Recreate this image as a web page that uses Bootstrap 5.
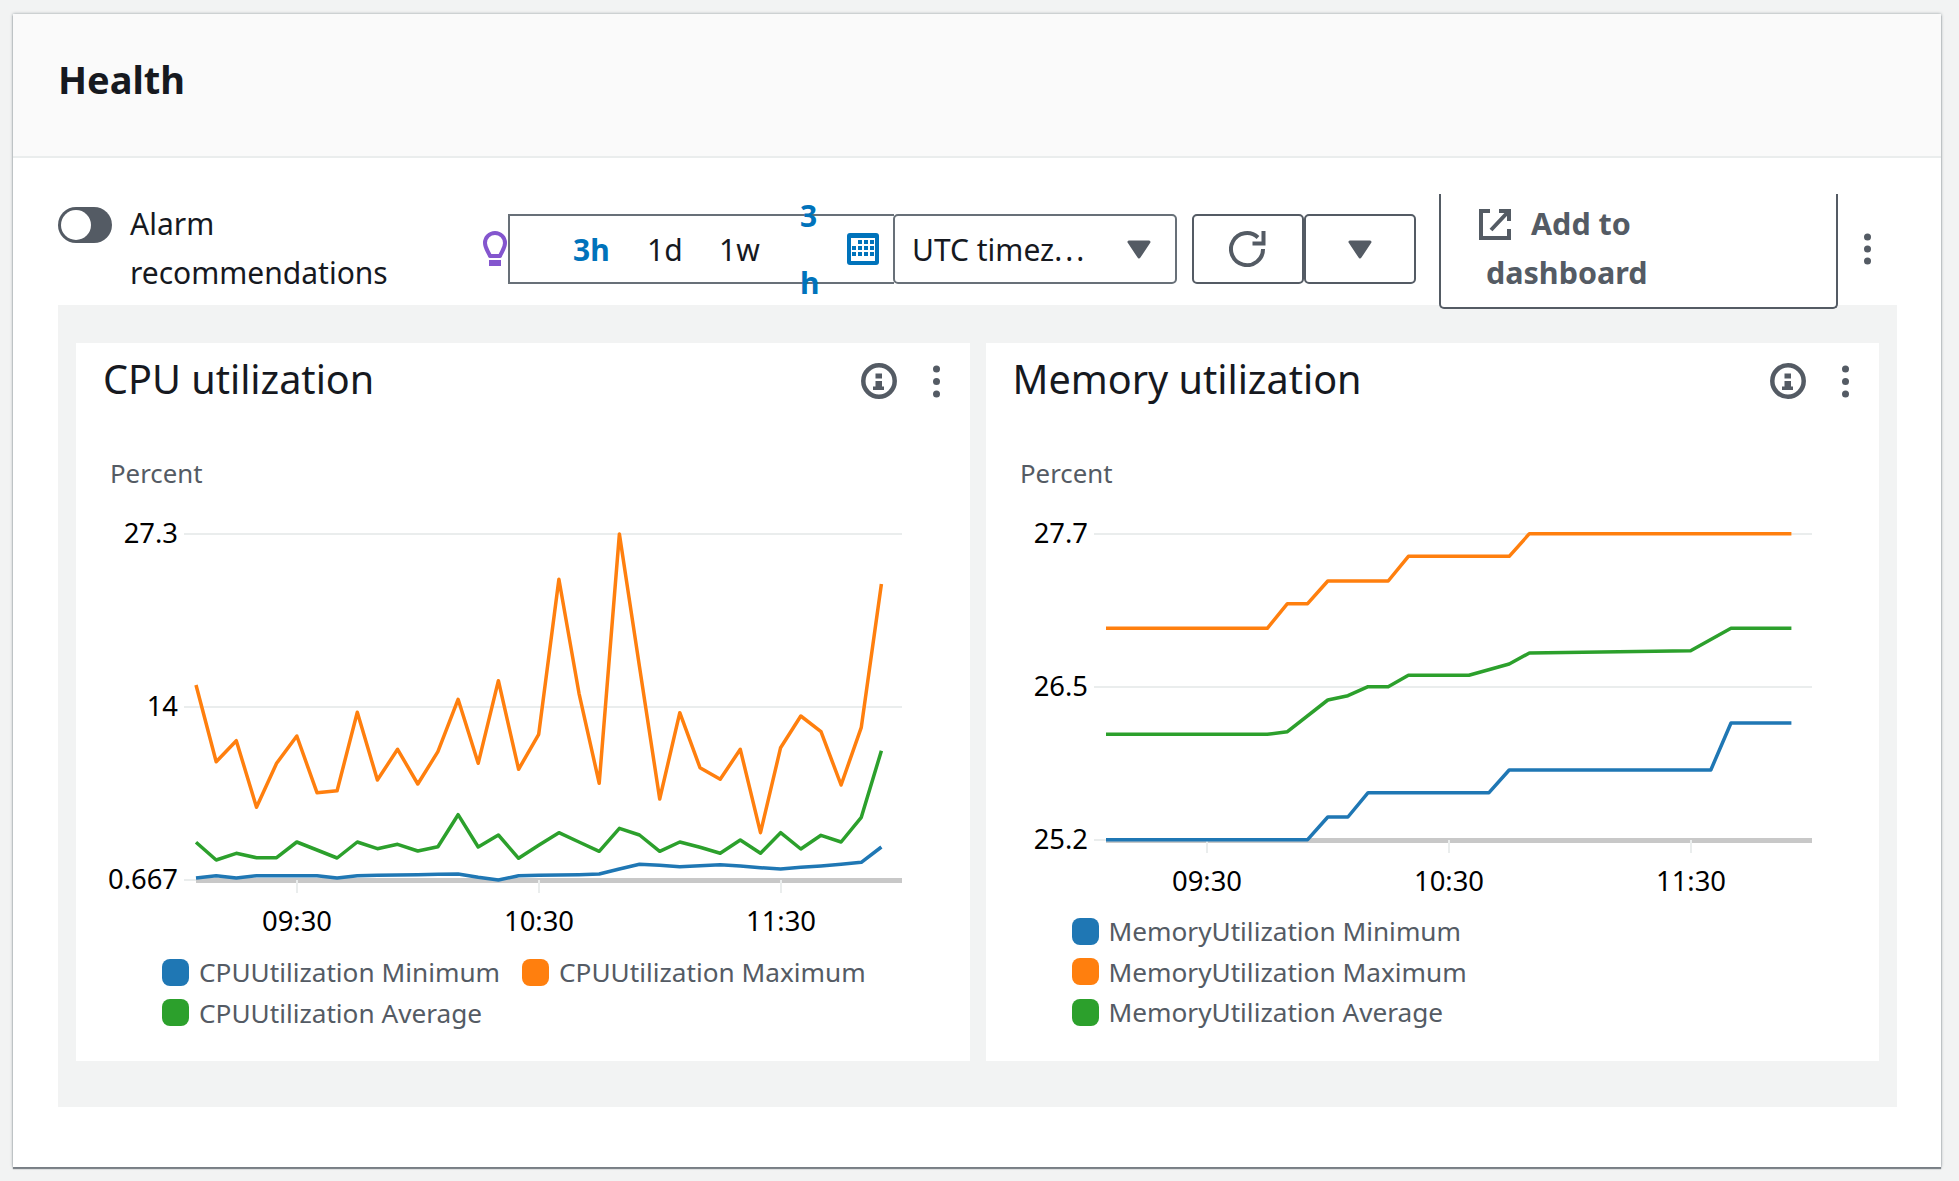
<!DOCTYPE html>
<html lang="en">
<head>
<meta charset="utf-8">
<title>Health</title>
<link href="https://cdn.jsdelivr.net/npm/bootstrap@5.3.0/dist/css/bootstrap.min.css" rel="stylesheet">
<style>
html,body{height:100%;overflow:hidden}
body{background:#f2f3f3;font-family:"Noto Sans","Open Sans",sans-serif;color:#16191f}
.hp-panel{margin:14px 18px 0 13px;height:1153px;border:0;border-radius:0;box-shadow:0 2px 1px rgba(84,91,100,.7),0 0 3px rgba(0,28,36,.4)}
.hp-head{height:144px;background:#fafafa;border-bottom:2px solid #eaeded;border-radius:0!important;padding:0 45px}
.hp-title{font-size:38px;font-weight:700;line-height:1;margin:0;color:#16191f;position:relative;top:-6px}
.hp-body{padding:36px 44px 0 45px}
.hp-tools{height:115px;margin-bottom:-4px;position:relative;z-index:2}
.hp-toggle{width:54px;height:36px;border-radius:18px;background:#545b64;margin-top:13px;padding:3px;flex:none}
.hp-knob{width:30px;height:30px;border-radius:50%;background:#fff}
.hp-alarm{width:353px;margin:5px 0 0 18px;font-size:30px;line-height:49px;flex:none}
.hp-bulb{width:24px;height:35px;margin-top:37px;margin-left:0;flex:none}
.hp-range{margin-top:20px;height:70px;width:386px;border:2px solid #687078;border-right:0;background:#fff;padding-left:63px;font-size:30px;flex:none;white-space:nowrap;margin-left:1px}
.hp-range span{display:block}
.hp-on{color:#0073bb;font-weight:700}
.hp-stack{width:16px;line-height:67px;text-align:center}
.hp-select{margin-top:20px;height:70px;width:284px;border:2px solid #687078;border-radius:5px;padding:0 24px 0 17px;font-size:30px;flex:none;margin-left:-1px}
.hp-dots{letter-spacing:3px}
.hp-iconbtn{margin-top:20px;height:70px;width:112px;border:2px solid #545b64;border-radius:5px;flex:none;background:#fff;padding:0}
.hp-add{margin-left:23px;width:399px;height:115px;border:2px solid #545b64;border-top:0;border-radius:0 0 5px 5px;padding:5px 0 0 45px;font-size:30.5px;line-height:49px;font-weight:700;color:#545b64;background:#fff;flex:none}
.hp-add svg{margin:0 20px 0 -7px;vertical-align:-5px}
.hp-more{margin:39px 0 0 25px;flex:none}
.hp-board{margin:0;height:802px;background:#f2f3f3;padding:38px 18px 0}
.hp-widget{background:#fff;height:718px;flex:1 1 0;min-width:0}
.hp-whead{height:76px;padding:0 29px 0 27px}
.hp-wtitle{font-size:39.6px;font-weight:400;line-height:1;margin:0;color:#16191f;position:relative;top:-1px}
.hp-wtools{gap:35px}
.hp-chart{display:block;font-family:"Noto Sans","Open Sans",sans-serif}
.hp-legend{font-size:26.2px;color:#545b64;padding-left:86px;line-height:40.5px;padding-top:1px}
.hp-item{gap:10px;margin-right:22px}
.hp-dot{width:27px;height:27px;border-radius:8px;flex:none}
.bg-a{background:#1f77b4}.bg-b{background:#ff7f0e}.bg-c{background:#2ca02c}
.hp-axis{font-size:27.4px;fill:#000}
.hp-unit{font-size:25.8px;fill:#545b64}
</style>
</head>
<body>
<div class="card hp-panel">
  <div class="card-header hp-head d-flex align-items-center"><h2 class="hp-title">Health</h2></div>
  <div class="card-body hp-body">
    <div class="hp-tools d-flex align-items-start">
      <div class="hp-toggle"><div class="hp-knob"></div></div>
      <div class="hp-alarm">Alarm<br>recommendations</div>
      <svg class="hp-bulb" viewBox="0 0 24 35"><path d="M7 25C5 20 2 17 2 12a10 10 0 0 1 20 0c0 5-3 8-5 13z" fill="none" stroke="#8456ce" stroke-width="4" stroke-linejoin="round"/><rect x="6" y="29" width="12" height="6" fill="#8456ce"/></svg>
      <div class="hp-range d-flex align-items-center">
        <span class="hp-on" style="width:34px">3h</span>
        <span style="margin-left:40px;width:34px">1d</span>
        <span style="margin-left:38px;width:42px">1w</span>
        <span class="hp-on hp-stack" style="margin-left:39px">3<br>h</span>
        <svg style="margin-left:31px" width="32" height="32" viewBox="0 0 32 32"><rect width="32" height="32" rx="3" fill="#0073bb"/><rect x="4" y="5" width="24" height="23" fill="#fff"/><g fill="#0073bb"><rect x="11" y="7" width="4" height="4"/><rect x="17" y="7" width="4" height="4"/><rect x="23" y="7" width="4" height="4"/><rect x="5" y="13" width="4" height="4"/><rect x="11" y="13" width="4" height="4"/><rect x="17" y="13" width="4" height="4"/><rect x="23" y="13" width="4" height="4"/><rect x="5" y="19" width="4" height="4"/><rect x="11" y="19" width="4" height="4"/><rect x="17" y="19" width="4" height="4"/><rect x="23" y="19" width="4" height="4"/></g></svg>
      </div>
      <div class="hp-select d-flex align-items-center justify-content-between">
        <span>UTC timez<span class="hp-dots">...</span></span>
        <svg width="24" height="19" viewBox="0 0 24 19"><path d="M2 2h20L12 17z" fill="#545b64" stroke="#545b64" stroke-width="3" stroke-linejoin="round"/></svg>
      </div>
      <button class="btn hp-iconbtn d-flex align-items-center justify-content-center" style="margin-left:15px" aria-label="Refresh">
        <svg width="38" height="36" viewBox="0 0 38 36"><path d="M29 6.500A16 16 0 1 0 34 18" fill="none" stroke="#545b64" stroke-width="4"/><path d="M34.500 0v12.500H23.500" fill="none" stroke="#545b64" stroke-width="4"/></svg>
      </button>
      <button class="btn hp-iconbtn d-flex align-items-center justify-content-center" aria-label="Options">
        <svg width="24" height="19" viewBox="0 0 24 19"><path d="M2 2h20L12 17z" fill="#545b64" stroke="#545b64" stroke-width="3" stroke-linejoin="round"/></svg>
      </button>
      <div class="hp-add"><svg width="32" height="31" viewBox="0 0 32 31"><path d="M11 2H2v27h28v-9" fill="none" stroke="#545b64" stroke-width="4"/><path d="M20 2h10v10M29 3L12 21" fill="none" stroke="#545b64" stroke-width="4"/></svg>Add to<br>dashboard</div>
      <svg class="hp-more" width="9" height="32" viewBox="0 0 9 32"><g fill="#545b64"><circle cx="4.500" cy="4" r="3.500"/><circle cx="4.500" cy="16" r="3.500"/><circle cx="4.500" cy="28" r="3.500"/></g></svg>
    </div>
    <div class="hp-board d-flex gap-3">
      <section class="hp-widget">
        <div class="hp-whead d-flex align-items-center justify-content-between">
          <h3 class="hp-wtitle">CPU utilization</h3>
          <div class="hp-wtools d-flex align-items-center">
            <svg width="36" height="36" viewBox="0 0 36 36"><circle cx="18" cy="18" r="15.700" fill="none" stroke="#545b64" stroke-width="4.500"/><g fill="#545b64"><rect x="14.500" y="10.500" width="6.500" height="5"/><rect x="14.500" y="18" width="6.500" height="7"/><rect x="12" y="23.500" width="11" height="3.500"/></g></svg>
            <svg width="9" height="33" viewBox="0 0 9 33"><g fill="#545b64"><circle cx="4.500" cy="4" r="3.500"/><circle cx="4.500" cy="16.500" r="3.500"/><circle cx="4.500" cy="29" r="3.500"/></g></svg>
          </div>
        </div>
        <svg id="cpu" class="hp-chart" width="893" height="532" viewBox="0 0 893 532"></svg>
        <div class="hp-legend d-flex flex-wrap">
          <div class="hp-item d-flex align-items-center"><i class="hp-dot bg-a"></i>CPUUtilization Minimum</div>
          <div class="hp-item d-flex align-items-center"><i class="hp-dot bg-b"></i>CPUUtilization Maximum</div>
          <div class="hp-item d-flex align-items-center"><i class="hp-dot bg-c"></i>CPUUtilization Average</div>
        </div>
      </section>
      <section class="hp-widget">
        <div class="hp-whead d-flex align-items-center justify-content-between">
          <h3 class="hp-wtitle">Memory utilization</h3>
          <div class="hp-wtools d-flex align-items-center">
            <svg width="36" height="36" viewBox="0 0 36 36"><circle cx="18" cy="18" r="15.700" fill="none" stroke="#545b64" stroke-width="4.500"/><g fill="#545b64"><rect x="14.500" y="10.500" width="6.500" height="5"/><rect x="14.500" y="18" width="6.500" height="7"/><rect x="12" y="23.500" width="11" height="3.500"/></g></svg>
            <svg width="9" height="33" viewBox="0 0 9 33"><g fill="#545b64"><circle cx="4.500" cy="4" r="3.500"/><circle cx="4.500" cy="16.500" r="3.500"/><circle cx="4.500" cy="29" r="3.500"/></g></svg>
          </div>
        </div>
        <svg id="mem" class="hp-chart" width="894" height="491" viewBox="0 0 894 491"></svg>
        <div class="hp-legend d-flex flex-column">
          <div class="hp-item d-flex align-items-center"><i class="hp-dot bg-a"></i>MemoryUtilization Minimum</div>
          <div class="hp-item d-flex align-items-center"><i class="hp-dot bg-b"></i>MemoryUtilization Maximum</div>
          <div class="hp-item d-flex align-items-center"><i class="hp-dot bg-c"></i>MemoryUtilization Average</div>
        </div>
      </section>
    </div>
  </div>
</div>
<script>
// Chart origin: the widget head ends at page y 419; readings below are in page pixels.
var TOP = 419, STEP = 20.16;
function line(d, c, x0){ return '<polyline fill="none" stroke="'+c+'" stroke-width="3.5" stroke-linejoin="round" points="'+d.map(function(p){return (x0+p[0]*STEP).toFixed(1)+','+p[1].toFixed(1)}).join(' ')+'"/>'; }
function chart(id, o){
  var s = '<text class="hp-unit" x="34" y="'+(483-TOP)+'">Percent</text>';
  o.grid.forEach(function(g,i){
    var y = g[0]-TOP, last = i===o.grid.length-1;
    s += '<line x1="108" x2="826" y1="'+y+'" y2="'+y+'" stroke="#eaeded" stroke-width="2"/>';
    if(last) s += '<line x1="120" x2="826" y1="'+(y+.5)+'" y2="'+(y+.5)+'" stroke="#c8c8c8" stroke-width="5"/>';
    s += '<text class="hp-axis" x="102" text-anchor="end" y="'+(y+9)+'">'+g[1]+'</text>';
  });
  var b = o.grid[o.grid.length-1][0]-TOP;
  [221,463,705].forEach(function(x,i){
    s += '<line x1="'+x+'" x2="'+x+'" y1="'+b+'" y2="'+(b+13)+'" stroke="#eaeded" stroke-width="2"/>';
    s += '<text class="hp-axis" x="'+x+'" text-anchor="middle" y="'+(b+51)+'">'+['09:30','10:30','11:30'][i]+'</text>';
  });
  s += line(o.blue,'#1f77b4',120)+line(o.orange,'#ff7f0e',120)+line(o.green,'#2ca02c',120);
  document.getElementById(id).innerHTML = s;
}
function seq(a){ return a.map(function(v,i){return [i,500+v/3-TOP]}); }
function pts(a){ return a.map(function(p){return [p[0],500+p[1]/3-TOP]}); }
chart('cpu',{grid:[[534,'27.3'],[707,'14'],[880,'0.667']],
 orange:seq([555,785,722,922,790,708,878,872,637,840,748,852,755,598,790,542,808,703,238,580,850,102,500,897,638,803,838,748,998,743,648,695,855,682,252]),
 green:seq([1027,1080,1060,1073,1073,1026,1050,1074,1026,1046,1033,1053,1040,944,1041,1005,1075,1036,998,1026,1054,985,1005,1054,1026,1042,1060,1020,1060,998,1047,1006,1026,952,752]),
 blue:seq([1134,1127,1134,1127,1127,1127,1127,1134,1127,1126,1125,1124,1123,1122,1132,1140,1127,1126,1125,1124,1122,1107,1093,1096,1100,1097,1094,1098,1103,1107,1102,1098,1093,1087,1041])});
chart('mem',{grid:[[534,'27.7'],[687,'26.5'],[840,'25.2']],
 orange:pts([[0,385],[8,385],[9,311],[10,311],[11,243],[14,243],[15,169],[20,169],[21,101],[34,101]]),
 green:pts([[0,703],[8,703],[9,695],[11,600],[12,587],[13,560],[14,560],[15,526],[18,526],[20,492],[21,459],[29,452],[31,385],[34,385]]),
 blue:pts([[0,1019],[10,1019],[11,951],[12,951],[13,878],[19,878],[20,810],[30,810],[31,669],[34,669]])});
</script>
<script src="https://cdn.jsdelivr.net/npm/bootstrap@5.3.0/dist/js/bootstrap.bundle.min.js"></script>
</body>
</html>
